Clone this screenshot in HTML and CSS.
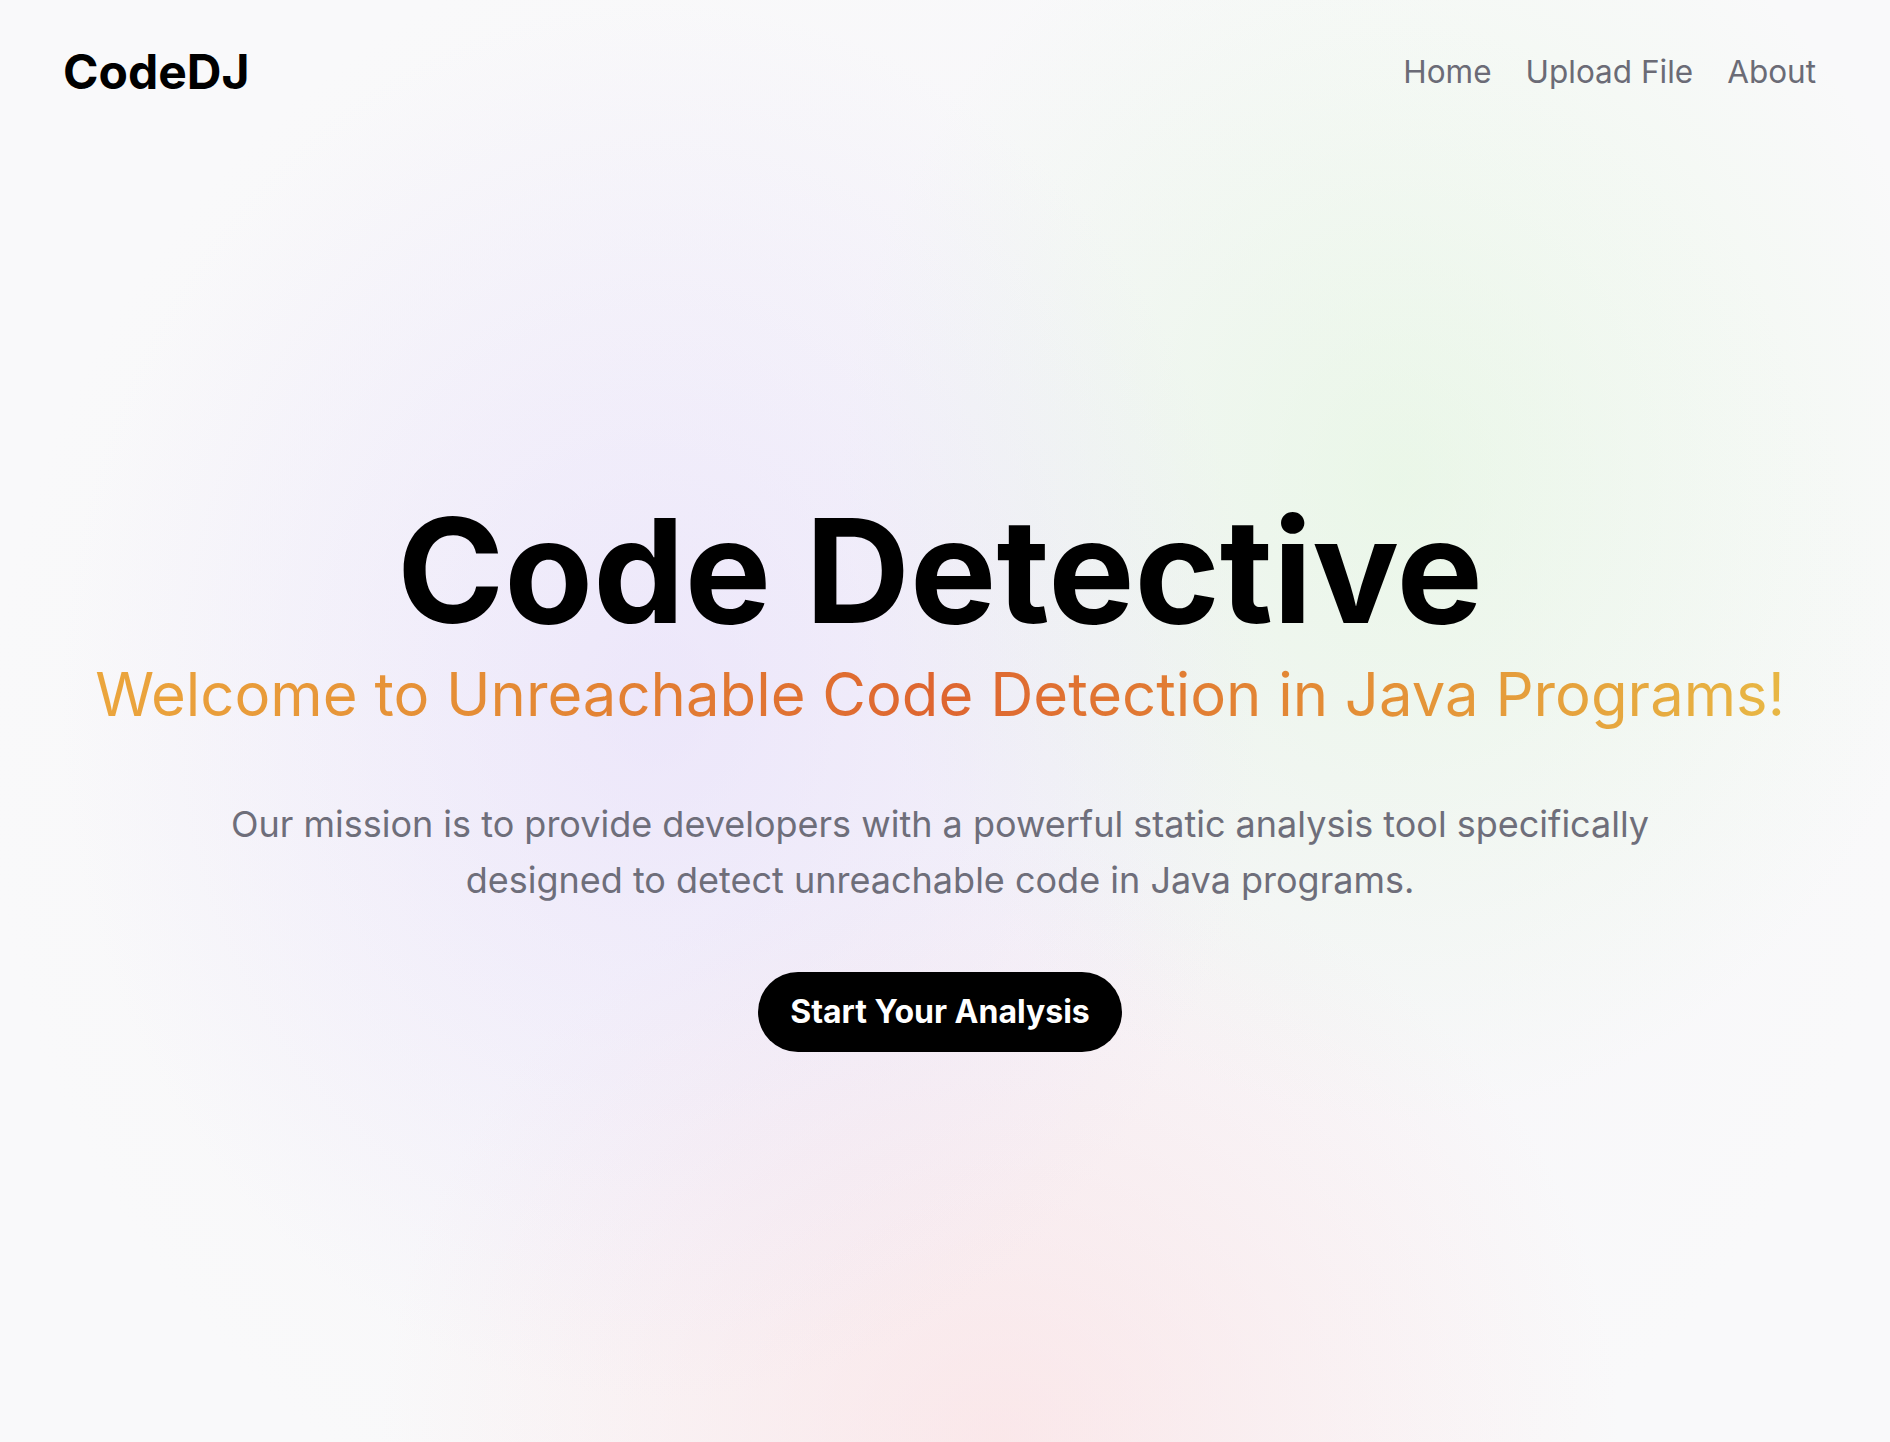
FILE: index.html
```html
<!DOCTYPE html>
<html lang="en">
<head>
<meta charset="utf-8">
<title>CodeDJ</title>
<link rel="stylesheet" href="styles.css">
</head>
<body>
<div class="page">
  <header class="site-header">
    <a class="logo" href="#">CodeDJ</a>
    <nav class="nav">
      <a href="#">Home</a>
      <a href="#">Upload File</a>
      <a href="#">About</a>
    </nav>
  </header>
  <main class="hero">
    <h1 class="title">Code Detective</h1>
    <h2 class="subtitle">Welcome to Unreachable Code Detection in Java Programs!</h2>
    <p class="mission">Our mission is to provide developers with a powerful static analysis tool specifically designed to detect unreachable code in Java programs.</p>
    <a class="cta" href="#">Start Your Analysis</a>
  </main>
</div>
</body>
</html>
```
FILE: styles.css
```css
* { box-sizing: border-box; }
html, body { margin: 0; padding: 0; }
body {
  font-family: Inter, "Noto Sans", sans-serif;
  min-height: 100vh;
  background:
    radial-gradient(ellipse 600px 700px at 660px 700px, rgba(222, 210, 252, 0.42), rgba(222, 210, 252, 0) 100%),
    radial-gradient(ellipse 560px 640px at 1400px 480px, rgba(215, 246, 208, 0.42), rgba(215, 246, 208, 0) 100%),
    radial-gradient(ellipse 620px 600px at 1000px 1440px, rgba(252, 215, 218, 0.5), rgba(252, 215, 218, 0) 100%),
    radial-gradient(ellipse 960px 900px at 945px 760px, rgba(243, 240, 248, 0.55), rgba(243, 240, 248, 0) 100%),
    #f9f9fa;
}
.page {
  min-height: 100vh;
  margin-right: 10px;
  display: flex;
  flex-direction: column;
}
.site-header {
  display: flex;
  justify-content: space-between;
  align-items: center;
  height: 142px;
  padding: 0 64px 0 63px;
}
.logo {
  font-size: 48px;
  font-weight: 700;
  color: #000;
  text-decoration: none;
}
.nav { display: flex; gap: 34px; }
.nav a {
  font-size: 31.5px;
  color: #6b6b76;
  text-decoration: none;
}
.hero {
  display: flex;
  flex-direction: column;
  align-items: center;
  text-align: center;
  padding-top: 356px;
}
.title {
  margin: 0;
  font-size: 145px;
  line-height: 1;
  font-weight: 700;
  color: #000;
}
.subtitle {
  margin: 16px 0 0;
  font-size: 59.8px;
  line-height: 1.2;
  font-weight: 400;
  background: linear-gradient(90deg, #eba63d 0%, #e48a35 25%, #de6530 50%, #e38a35 72%, #e8b744 100%);
  -webkit-background-clip: text;
  background-clip: text;
  color: transparent;
}
.mission {
  margin: 65px 0 0;
  max-width: 1500px;
  font-size: 36px;
  line-height: 56px;
  color: #6e6e7a;
}
.cta {
  margin-top: 64px;
  display: inline-block;
  padding: 22px 32px;
  font-size: 32px;
  line-height: 36px;
  font-weight: 700;
  color: #fff;
  background: #000;
  border-radius: 999px;
  text-decoration: none;
}
```
